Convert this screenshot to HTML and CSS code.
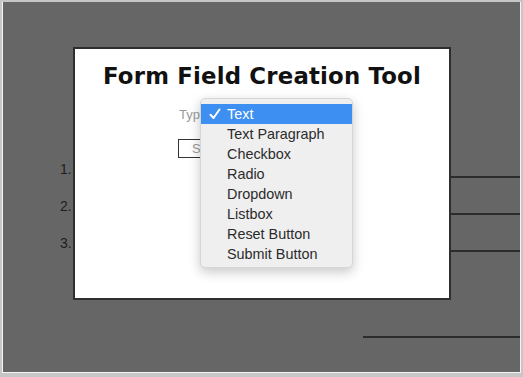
FILE: index.html
```html
<!DOCTYPE html>
<html>
<head>
<meta charset="utf-8">
<link rel="stylesheet" href="styles.css">
</head>
<body>
<div class="frame">
  <div class="doc">
    <div class="row"><span class="num">1.</span><span class="rule"></span></div>
    <div class="row"><span class="num">2.</span><span class="rule"></span></div>
    <div class="row"><span class="num">3.</span><span class="rule"></span></div>
    <div class="tail"><span class="rule short"></span></div>
  </div>
</div>

<div class="dialog">
  <h1 class="title">Form Field Creation Tool</h1>
  <div class="type-row">
    <span class="label">Typ</span>
    <span class="select"></span>
  </div>
  <div class="btn-row">
    <span class="btn">S</span>
  </div>
</div>

<ul class="menu">
  <li class="item selected"><svg class="check" width="12" height="12" viewBox="0 0 12 12"><path d="M1.5 6.8 L4.5 10 L10.5 1.5" fill="none" stroke="#fff" stroke-width="2" stroke-linecap="round" stroke-linejoin="round"/></svg>Text</li>
  <li class="item">Text Paragraph</li>
  <li class="item">Checkbox</li>
  <li class="item">Radio</li>
  <li class="item">Dropdown</li>
  <li class="item">Listbox</li>
  <li class="item">Reset Button</li>
  <li class="item">Submit Button</li>
</ul>
</body>
</html>
```
FILE: styles.css
```css
html, body {
  margin: 0;
  padding: 0;
}
body {
  width: 523px;
  height: 377px;
  background: #c6c6c6;
  position: relative;
  overflow: hidden;
  font-family: "Liberation Sans", Arial, sans-serif;
}
.frame {
  position: absolute;
  left: 2px;
  top: 2px;
  width: 517px;
  height: 370px;
  background: #666666;
  border-left: 1px solid #f4f4f4;
  border-right: 1px solid #f4f4f4;
  border-bottom: 1px solid #f4f4f4;
}
.doc {
  padding-top: 141px;
  padding-left: 57px;
}
.row {
  display: flex;
  align-items: flex-end;
  height: 37px;
}
.num {
  font-size: 14px;
  color: #1e1e1e;
  width: 13px;
  line-height: 16px;
  padding-bottom: 3px;
}
.rule {
  flex: 1;
  height: 0;
  border-bottom: 2px solid #2c2c2c;
  margin-bottom: 2px;
}
.tail {
  display: flex;
  justify-content: flex-end;
  margin-top: 82px;
}
.rule.short {
  flex: none;
  width: 157px;
}
.dialog {
  position: absolute;
  left: 73px;
  top: 47px;
  width: 374px;
  height: 249px;
  background: #fff;
  border: 2px solid #2e2e2e;
  display: flex;
  flex-direction: column;
  align-items: center;
}
.title {
  margin: 13px 0 0 0;
  font-family: "DejaVu Sans", sans-serif;
  font-weight: bold;
  font-size: 22.8px;
  line-height: 28px;
  color: #111;
  letter-spacing: 0.2px;
}
.type-row {
  display: flex;
  align-items: center;
  margin-top: 15px;
  height: 18px;
  align-self: flex-start;
  margin-left: 104px;
}
.label {
  font-size: 13px;
  color: #9a9a9a;
}
.select {
  width: 120px;
  height: 16px;
}
.btn-row {
  align-self: flex-start;
  margin-left: 103px;
  margin-top: 16px;
}
.btn {
  display: block;
  width: 70px;
  height: 17px;
  border: 1px solid #333;
  font-size: 13px;
  line-height: 17px;
  color: #999;
  padding-left: 13px;
  box-sizing: content-box;
}
.menu {
  position: absolute;
  left: 200px;
  top: 98px;
  width: 153px;
  height: 170px;
  margin: 0;
  padding: 5px 0 0 0;
  box-sizing: border-box;
  list-style: none;
  background: #efefef;
  border: 1px solid #d6d6d6;
  border-radius: 5px;
  box-shadow: 0 4px 12px rgba(0, 0, 0, 0.22);
}
.item {
  height: 20px;
  line-height: 20px;
  padding-left: 26px;
  font-size: 14.4px;
  color: #2b2b2b;
  position: relative;
}
.item.selected {
  background: #3d8ff2;
  color: #fff;
}
.check {
  position: absolute;
  left: 8px;
  top: 4px;
}
```
